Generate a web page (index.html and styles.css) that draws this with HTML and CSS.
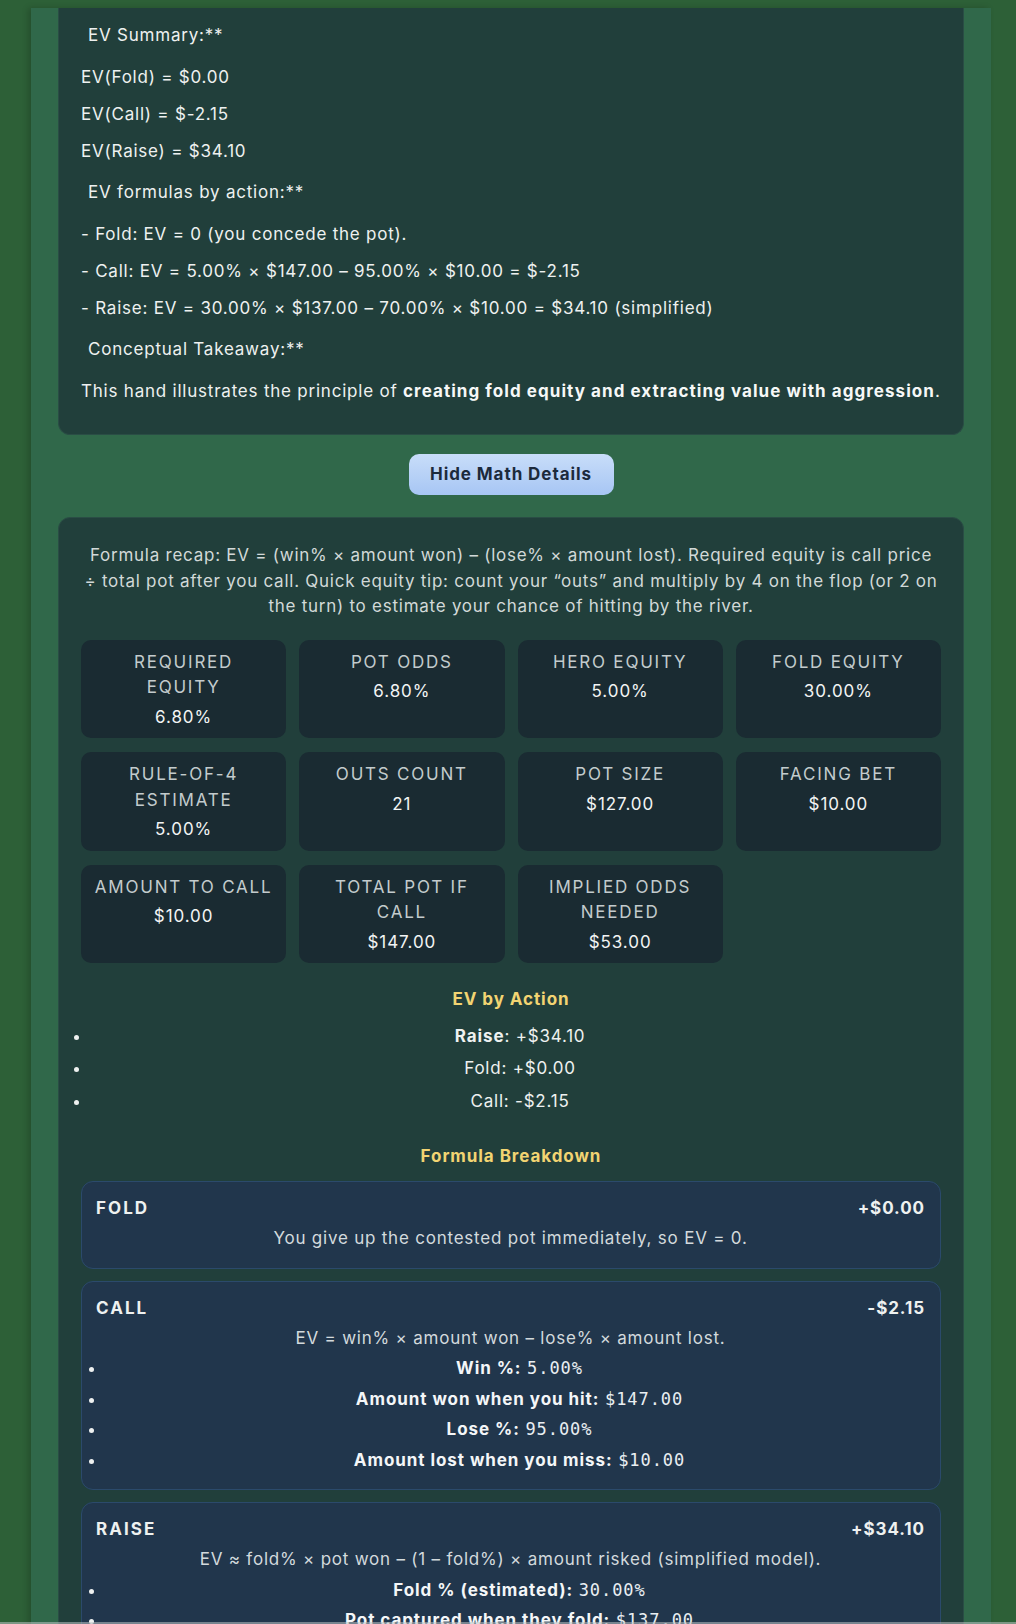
FILE: index.html
```html
<!DOCTYPE html>
<html lang="en">
<head>
<meta charset="utf-8">
<title>Hand Review – Math Details</title>
<link rel="stylesheet" href="styles.css">
</head>
<body>
<div class="page">
  <section class="card summary">
    <p class="line head">EV Summary:**</p>
    <p class="line">EV(Fold) = $0.00</p>
    <p class="line">EV(Call) = $-2.15</p>
    <p class="line">EV(Raise) = $34.10</p>
    <p class="line head">EV formulas by action:**</p>
    <p class="line">- Fold: EV = 0 (you concede the pot).</p>
    <p class="line">- Call: EV = 5.00% × $147.00 – 95.00% × $10.00 = $-2.15</p>
    <p class="line">- Raise: EV = 30.00% × $137.00 – 70.00% × $10.00 = $34.10 (simplified)</p>
    <p class="line head">Conceptual Takeaway:**</p>
    <p class="line">This hand illustrates the principle of <strong>creating fold equity and extracting value with aggression</strong>.</p>
  </section>

  <div class="btn-row">
    <button class="toggle" type="button">Hide Math Details</button>
  </div>

  <section class="card math">
    <p class="recap">Formula recap: EV = (win% × amount won) – (lose% × amount lost). Required equity is call price ÷&nbsp;total pot after you call. Quick equity tip: count your “outs” and multiply by 4 on the flop (or 2 on the turn) to estimate your chance of hitting by the river.</p>

    <div class="stats">
      <div class="stat"><div class="stat-label">Required Equity</div><div class="stat-value">6.80%</div></div>
      <div class="stat"><div class="stat-label">Pot Odds</div><div class="stat-value">6.80%</div></div>
      <div class="stat"><div class="stat-label">Hero Equity</div><div class="stat-value">5.00%</div></div>
      <div class="stat"><div class="stat-label">Fold Equity</div><div class="stat-value">30.00%</div></div>
      <div class="stat"><div class="stat-label">Rule-of-4 Estimate</div><div class="stat-value">5.00%</div></div>
      <div class="stat"><div class="stat-label">Outs Count</div><div class="stat-value">21</div></div>
      <div class="stat"><div class="stat-label">Pot Size</div><div class="stat-value">$127.00</div></div>
      <div class="stat"><div class="stat-label">Facing Bet</div><div class="stat-value">$10.00</div></div>
      <div class="stat"><div class="stat-label">Amount to Call</div><div class="stat-value">$10.00</div></div>
      <div class="stat"><div class="stat-label">Total Pot if Call</div><div class="stat-value">$147.00</div></div>
      <div class="stat"><div class="stat-label">Implied Odds Needed</div><div class="stat-value">$53.00</div></div>
    </div>

    <div class="section ev-section">
      <h4 class="sec-title">EV by Action</h4>
      <ul class="blist">
        <li><strong>Raise</strong>: +$34.10</li>
        <li>Fold: +$0.00</li>
        <li>Call: -$2.15</li>
      </ul>
    </div>

    <div class="section formula-section">
      <h4 class="sec-title">Formula Breakdown</h4>

      <div class="fcard">
        <div class="fhead"><span class="fname">FOLD</span><span class="famt">+$0.00</span></div>
        <p class="fdesc">You give up the contested pot immediately, so EV = 0.</p>
      </div>

      <div class="fcard">
        <div class="fhead"><span class="fname">CALL</span><span class="famt">-$2.15</span></div>
        <p class="fdesc">EV = win% × amount won – lose% × amount lost.</p>
        <ul class="blist flist">
          <li><strong>Win %:</strong> <code>5.00%</code></li>
          <li><strong>Amount won when you hit:</strong> <code>$147.00</code></li>
          <li><strong>Lose %:</strong> <code>95.00%</code></li>
          <li><strong>Amount lost when you miss:</strong> <code>$10.00</code></li>
        </ul>
      </div>

      <div class="fcard">
        <div class="fhead"><span class="fname">RAISE</span><span class="famt">+$34.10</span></div>
        <p class="fdesc">EV ≈ fold% × pot won – (1 – fold%) × amount risked (simplified model).</p>
        <ul class="blist flist">
          <li><strong>Fold % (estimated):</strong> <code>30.00%</code></li>
          <li><strong>Pot captured when they fold:</strong> <code>$137.00</code></li>
          <li><strong>Continue %:</strong> <code>70.00%</code></li>
          <li><strong>Amount risked when called:</strong> <code>$10.00</code></li>
        </ul>
      </div>
    </div>
  </section>
</div>
<div class="bottom-edge"></div>
</body>
</html>
```

FILE: styles.css
```css
* { box-sizing: border-box; }

html, body {
  margin: 0;
  padding: 0;
}

body {
  background: #2d6037;
  padding-top: 8px;
  font-family: Inter, "Noto Sans", "Liberation Sans", sans-serif;
  font-size: 17px;
  line-height: 25.5px;
  letter-spacing: 0.046em;
  color: #eef1f0;
}

strong { letter-spacing: 0.055em; }

.page {
  width: 960px;
  margin-left: 31px;
  padding: 0 27px 40px;
  background: #30684a;
  box-shadow: -3px 0 6px rgba(0, 0, 0, 0.18);
  min-height: 1616px;
}

.card {
  background: #213f3b;
  border: 1px solid #2a4d45;
  border-radius: 12px;
}

.summary {
  border-top: none;
  border-radius: 0 0 12px 12px;
  padding: 15px 22px 30px;
}

.line {
  margin: 0 0 11.5px;
}

.line.head {
  padding-left: 7px;
  margin: 16px 0 16px;
}

.line:first-child { margin-top: 0; }
.line:last-child { margin-bottom: 0; }

.line strong { font-weight: 700; color: #f6f8f7; letter-spacing: 0.062em; }

.btn-row {
  display: flex;
  justify-content: center;
  margin: 19px 0 22px;
}

.toggle {
  font-family: inherit;
  font-size: 17px;
  font-weight: 700;
  line-height: 25.5px;
  letter-spacing: 0.055em;
  color: #1c2a3c;
  background: linear-gradient(180deg, #c8ddf9 0%, #a7c6f4 100%);
  border: none;
  border-radius: 10px;
  padding: 8px 10px;
  width: 205px;
  height: 41px;
}

.math {
  padding: 25px 22px 22px;
}

.recap {
  margin: 0 0 20px;
  text-align: center;
  color: #d2d9d8;
  letter-spacing: 0.044em;
}

.stats {
  display: grid;
  grid-template-columns: repeat(4, 1fr);
  gap: 14px 13px;
}

.stat {
  background: #1a2b32;
  border-radius: 10px;
  padding: 10px 13px 8px;
  text-align: center;
}

.stat-label {
  text-transform: uppercase;
  letter-spacing: 0.105em;
  color: #c3cbcd;
}

.stat-value {
  margin-top: 4px;
  color: #f2f4f4;
  letter-spacing: 0.055em;
}

.ev-section { margin-top: 24px; }
.formula-section { margin-top: 30px; }

.sec-title {
  margin: 0;
  text-align: center;
  font-size: 17px;
  font-weight: 700;
  letter-spacing: 0.055em;
  color: #f2d472;
}

.blist {
  margin: 11px 0 0;
  padding-left: 10px;
  text-align: center;
}

.blist li {
  padding-left: 8px;
  margin-bottom: 7px;
}

.blist li:last-child { margin-bottom: 0; }

.formula-section .sec-title { margin-bottom: 11.5px; }

.fcard {
  background: #21364c;
  border: 1px solid #2b4a6b;
  border-radius: 12px;
  padding: 14px 15px 16px 14px;
  margin-bottom: 12px;
}

.fhead {
  display: flex;
  justify-content: space-between;
  font-weight: 700;
  letter-spacing: 0.055em;
}

.fname {
  letter-spacing: 0.12em;
}

.fdesc {
  margin: 4.5px 0 0;
  text-align: center;
  color: #d3dadd;
}

.flist {
  margin-top: 4px;
}

.flist li {
  margin: 5px 0 0;
}

.flist li:last-child { margin-bottom: 0; }

.flist strong { font-weight: 700; color: #f4f6f8; }

code {
  font-family: "DejaVu Sans Mono", "Liberation Mono", monospace;
  font-size: 17px;
  letter-spacing: 0.055em;
  color: #e9eef2;
}

.bottom-edge {
  position: fixed;
  left: 0;
  right: 0;
  bottom: 0;
  height: 2px;
  background: rgba(190, 196, 198, 0.55);
}
```
